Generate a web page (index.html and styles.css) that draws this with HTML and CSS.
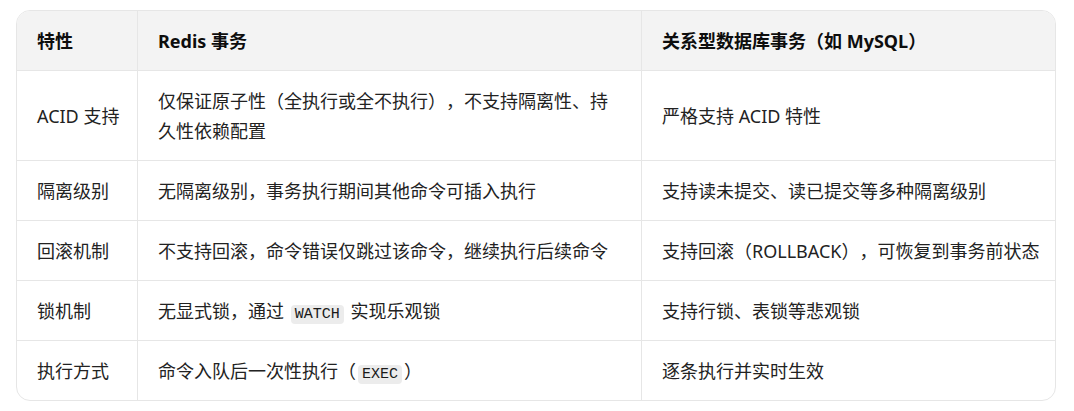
FILE: index.html
```html
<!DOCTYPE html>
<html lang="zh">
<head>
<meta charset="utf-8">
<link rel="stylesheet" href="styles.css">
</head>
<body>
<div class="wrap">
  <table class="cmp">
    <colgroup>
      <col class="c1"><col class="c2"><col class="c3">
    </colgroup>
    <thead>
      <tr><th>特性</th><th>Redis 事务</th><th>关系型数据库事务（如 MySQL）</th></tr>
    </thead>
    <tbody>
      <tr><td>ACID 支持</td><td>仅保证原子性（全执行或全不执行），不支持隔离性、持久性依赖配置</td><td>严格支持 ACID 特性</td></tr>
      <tr><td>隔离级别</td><td>无隔离级别，事务执行期间其他命令可插入执行</td><td>支持读未提交、读已提交等多种隔离级别</td></tr>
      <tr><td>回滚机制</td><td>不支持回滚，命令错误仅跳过该命令，继续执行后续命令</td><td>支持回滚（ROLLBACK），可恢复到事务前状态</td></tr>
      <tr><td>锁机制</td><td>无显式锁，通过 <code>WATCH</code> 实现乐观锁</td><td>支持行锁、表锁等悲观锁</td></tr>
      <tr><td>执行方式</td><td>命令入队后一次性执行（<code>EXEC</code>）</td><td>逐条执行并实时生效</td></tr>
    </tbody>
  </table>
</div>
</body>
</html>
```
FILE: styles.css
```css
html, body {
  margin: 0;
  padding: 0;
  background: #ffffff;
}
body {
  font-family: "Noto Sans", "Noto Sans CJK SC", sans-serif;
  font-size: 18px;
  color: #222222;
  text-spacing-trim: space-all;
}
.wrap {
  padding: 10px 19px 0 16px;
}
.cmp {
  width: 1040px;
  border-collapse: separate;
  border-spacing: 0;
  border: 1px solid #e6e6e6;
  border-radius: 14px;
  overflow: hidden;
  table-layout: fixed;
}
.c1 { width: 121px; }
.c2 { width: 504px; }
.c3 { width: auto; }
.cmp th, .cmp td {
  text-align: left;
  vertical-align: middle;
  padding: 15px 20px 14px 20px;
  line-height: 30px;
  border-right: 1px solid #e6e6e6;
  border-bottom: 1px solid #e6e6e6;
}
.cmp th:first-child, .cmp td:first-child {
  white-space: nowrap;
  padding-right: 8px;
}
.cmp th:last-child, .cmp td:last-child {
  border-right: none;
  padding-right: 6px;
}
.cmp tbody tr:last-child td { border-bottom: none; }
.cmp th {
  background: #f3f3f3;
  font-weight: 700;
  color: #0d0d0d;
}
.cmp code {
  font-family: "Liberation Mono", "DejaVu Sans Mono", monospace;
  font-size: 15px;
  line-height: 1;
  background: #ececec;
  border-radius: 4px;
  padding: 1px 4px;
  margin: 0 2px;
  color: #1a1a1a;
}
```
